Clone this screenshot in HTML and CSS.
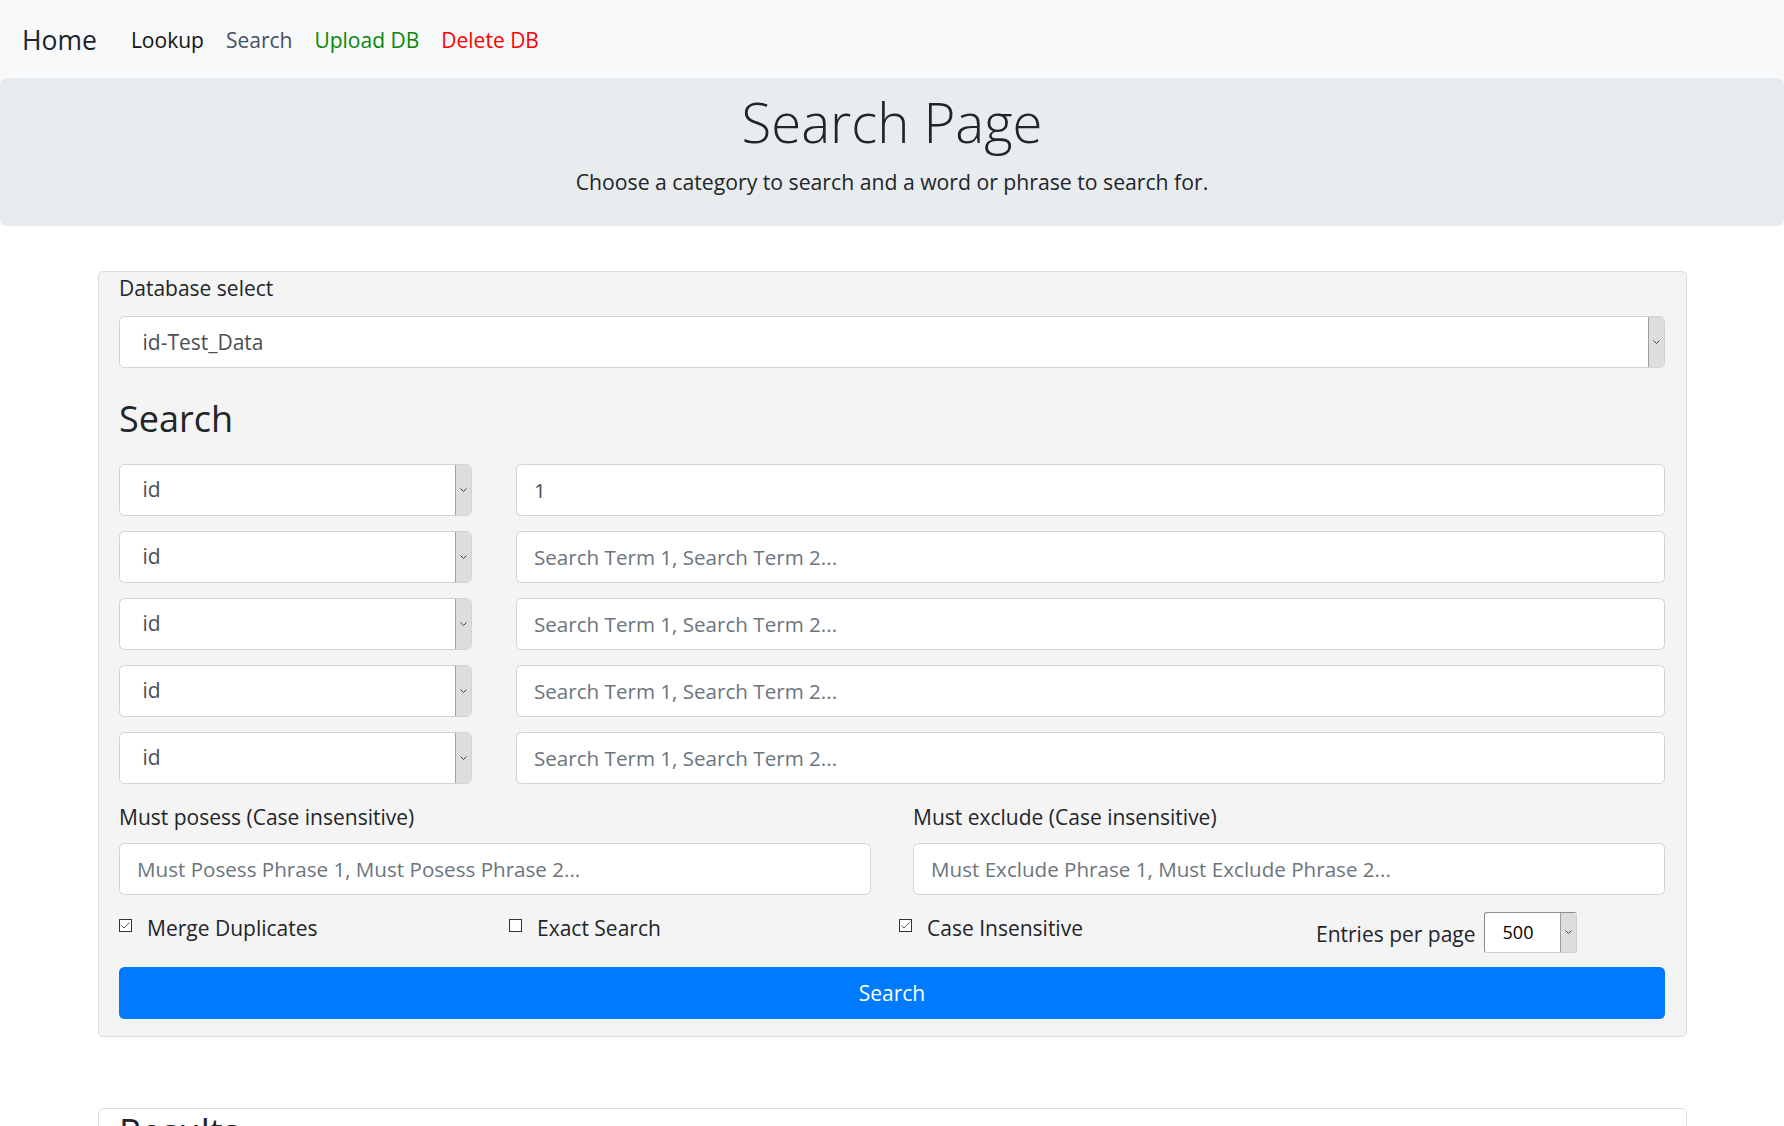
FILE: index.html
```html
<!DOCTYPE html>
<html lang="en">
<head>
<meta charset="utf-8">
<title>Search Page</title>
<link rel="stylesheet" href="styles.css">
</head>
<body>
<nav class="navbar">
  <a class="brand" href="#">Home</a>
  <ul class="nav">
    <li><a class="nav-link link-dark" href="#">Lookup</a></li>
    <li><a class="nav-link link-active" href="#">Search</a></li>
    <li><a class="nav-link link-green" href="#">Upload DB</a></li>
    <li><a class="nav-link link-red" href="#">Delete DB</a></li>
  </ul>
</nav>

<header class="jumbotron">
  <h1 class="title">Search Page</h1>
  <p class="subtitle">Choose a category to search and a word or phrase to search for.</p>
</header>

<main class="container">
  <form class="panel search-panel">
    <label class="field-label">Database select</label>
    <div class="select">
      <span class="select-value">id-Test_Data</span>
      <span class="select-btn"><svg width="7" height="4" viewBox="0 0 7 4"><polyline points="0.5,0.5 3.5,3.5 6.5,0.5" fill="none" stroke="#444" stroke-width="1"/></svg></span>
    </div>

    <h3 class="section-title">Search</h3>

    <div class="term-rows">
      <div class="term-row">
        <div class="select">
          <span class="select-value">id</span>
          <span class="select-btn"><svg width="7" height="4" viewBox="0 0 7 4"><polyline points="0.5,0.5 3.5,3.5 6.5,0.5" fill="none" stroke="#444" stroke-width="1"/></svg></span>
        </div>
        <input class="input" type="text" value="1">
      </div>
      <div class="term-row">
        <div class="select">
          <span class="select-value">id</span>
          <span class="select-btn"><svg width="7" height="4" viewBox="0 0 7 4"><polyline points="0.5,0.5 3.5,3.5 6.5,0.5" fill="none" stroke="#444" stroke-width="1"/></svg></span>
        </div>
        <input class="input" type="text" placeholder="Search Term 1, Search Term 2...">
      </div>
      <div class="term-row">
        <div class="select">
          <span class="select-value">id</span>
          <span class="select-btn"><svg width="7" height="4" viewBox="0 0 7 4"><polyline points="0.5,0.5 3.5,3.5 6.5,0.5" fill="none" stroke="#444" stroke-width="1"/></svg></span>
        </div>
        <input class="input" type="text" placeholder="Search Term 1, Search Term 2...">
      </div>
      <div class="term-row">
        <div class="select">
          <span class="select-value">id</span>
          <span class="select-btn"><svg width="7" height="4" viewBox="0 0 7 4"><polyline points="0.5,0.5 3.5,3.5 6.5,0.5" fill="none" stroke="#444" stroke-width="1"/></svg></span>
        </div>
        <input class="input" type="text" placeholder="Search Term 1, Search Term 2...">
      </div>
      <div class="term-row">
        <div class="select">
          <span class="select-value">id</span>
          <span class="select-btn"><svg width="7" height="4" viewBox="0 0 7 4"><polyline points="0.5,0.5 3.5,3.5 6.5,0.5" fill="none" stroke="#444" stroke-width="1"/></svg></span>
        </div>
        <input class="input" type="text" placeholder="Search Term 1, Search Term 2...">
      </div>
    </div>

    <div class="phrase-grid">
      <div class="phrase-col">
        <label class="field-label phrase-label">Must posess (Case insensitive)</label>
        <input class="input" type="text" placeholder="Must Posess Phrase 1, Must Posess Phrase 2...">
      </div>
      <div class="phrase-col">
        <label class="field-label phrase-label">Must exclude (Case insensitive)</label>
        <input class="input" type="text" placeholder="Must Exclude Phrase 1, Must Exclude Phrase 2...">
      </div>
    </div>

    <div class="options">
      <label class="check">
        <svg class="box" width="13" height="13" viewBox="0 0 13 13"><rect x="0.5" y="0.5" width="12" height="12" fill="#fff" stroke="#333"/><polyline points="2.5,6.5 5,9 10.5,3.5" fill="none" stroke="#555" stroke-width="1"/></svg>
        <span>Merge Duplicates</span>
      </label>
      <label class="check">
        <svg class="box" width="13" height="13" viewBox="0 0 13 13"><rect x="0.5" y="0.5" width="12" height="12" fill="#fff" stroke="#333"/></svg>
        <span>Exact Search</span>
      </label>
      <label class="check">
        <svg class="box" width="13" height="13" viewBox="0 0 13 13"><rect x="0.5" y="0.5" width="12" height="12" fill="#fff" stroke="#333"/><polyline points="2.5,6.5 5,9 10.5,3.5" fill="none" stroke="#555" stroke-width="1"/></svg>
        <span>Case Insensitive</span>
      </label>
      <div class="entries">
        <span class="entries-text">Entries per page</span>
        <div class="mini-select">
          <span class="mini-value">500</span>
          <span class="select-btn"><svg width="7" height="4" viewBox="0 0 7 4"><polyline points="0.5,0.5 3.5,3.5 6.5,0.5" fill="none" stroke="#444" stroke-width="1"/></svg></span>
        </div>
      </div>
    </div>

    <button class="btn-search" type="button">Search</button>
  </form>

  <section class="panel results">
    <h3 class="section-title results-title">Results</h3>
    <p class="results-empty">No results yet.</p>
  </section>
</main>
</body>
</html>
```

FILE: styles.css
```css
html {
  scrollbar-width: none;
}

body {
  margin: 0;
  font-family: "Open Sans", "Noto Sans", sans-serif;
  font-size: 21px;
  line-height: 30.75px;
  color: #212529;
  background: #fff;
}

/* Navbar */
.navbar {
  display: flex;
  align-items: center;
  height: 78px;
  padding: 2px 0 0 22px;
  box-sizing: border-box;
  background: #f8f9fa;
}

.brand {
  font-size: 26.5px;
  line-height: 40px;
  color: #212529;
  text-decoration: none;
  margin-right: 23px;
}

.nav {
  display: flex;
  list-style: none;
  margin: 0;
  padding: 0;
}

.nav-link {
  display: block;
  padding: 0 11px;
  font-size: 21px;
  text-decoration: none;
}

.link-dark { color: #111; }
.link-active { color: #44525e; }
.link-green { color: #0a870a; }
.link-red { color: #ff0000; }

/* Jumbotron */
.jumbotron {
  background: #e9ecef;
  border-radius: 6px;
  padding: 13px 16px 28.5px;
  margin: 0 0 45px;
  text-align: center;
}

.title {
  font-size: 54.5px;
  font-weight: 300;
  line-height: 62.4px;
  margin: 0 0 13.4px;
}

.subtitle {
  margin: 0;
  font-size: 21.2px;
}

/* Panels */
.container {
  width: 1589px;
  margin: 0 auto;
}

.panel {
  box-sizing: border-box;
  background: #f4f4f4;
  border: 1px solid #dcdcdc;
  border-radius: 5px;
  padding: 1px 20.5px 17px;
}

.field-label {
  display: block;
  margin-bottom: 12.5px;
}

.select {
  display: flex;
  height: 52px;
  box-sizing: border-box;
  border: 1px solid #ced4da;
  border-radius: 5.5px;
  background: #fff;
  overflow: hidden;
}

.select-value {
  flex: 1;
  display: flex;
  align-items: center;
  padding-left: 22.5px;
  color: #495057;
}

.select-btn {
  width: 15px;
  flex: none;
  display: flex;
  align-items: center;
  justify-content: center;
  background: #dddddd;
  border-left: 1px solid #a0a0a0;
}

.section-title {
  font-size: 36px;
  font-weight: 400;
  line-height: 43.2px;
  margin: 28.5px 0 23.5px;
}

.term-rows {
  display: flex;
  flex-direction: column;
  gap: 15px;
}

.term-row {
  display: grid;
  grid-template-columns: 353px 1fr;
  column-gap: 44px;
}

.input {
  display: block;
  width: 100%;
  height: 52px;
  box-sizing: border-box;
  border: 1px solid #ced4da;
  border-radius: 5.5px;
  padding: 0 17px;
  font-family: inherit;
  font-size: 20.6px;
  color: #495057;
  background: #fff;
  outline: none;
}

.input::placeholder {
  color: #6c757d;
  opacity: 1;
}

.phrase-grid {
  display: grid;
  grid-template-columns: 1fr 1fr;
  column-gap: 42px;
  margin-top: 18px;
}

.phrase-label {
  margin-bottom: 10.5px;
}

/* Options row */
.options {
  display: grid;
  grid-template-columns: 390px 390px 390px 1fr;
  height: 42px;
  margin: 16.5px 0 14px;
}

.check {
  display: flex;
  align-items: flex-start;
  padding-top: 2px;
}

.box {
  flex: none;
  margin-top: 5.5px;
  margin-right: 15px;
}

.entries {
  display: flex;
  align-items: center;
  padding-left: 27px;
}

.entries-text {
  padding-top: 4px;
  margin-right: 8px;
}

.mini-select {
  display: flex;
  width: 93px;
  height: 41px;
  box-sizing: border-box;
  border: 1px solid;
  border-color: #8c8c8c #d0d0d0 #d0d0d0 #8c8c8c;
  border-radius: 3px;
  background: #fff;
  overflow: hidden;
}

.mini-value {
  flex: 1;
  display: flex;
  align-items: center;
  padding-left: 18px;
  font-size: 18px;
  color: #000;
}

.btn-search {
  display: block;
  width: 100%;
  height: 52px;
  border: 0;
  border-radius: 5.5px;
  background: #007bff;
  color: #fff;
  font: inherit;
}

/* Results */
.results {
  margin-top: 71px;
  background: #fff;
  border-color: #dedede;
  padding-bottom: 40px;
}

.results-title {
  margin: 0 0 22px;
}

.results-empty {
  margin: 0;
  color: #6c757d;
}
```
